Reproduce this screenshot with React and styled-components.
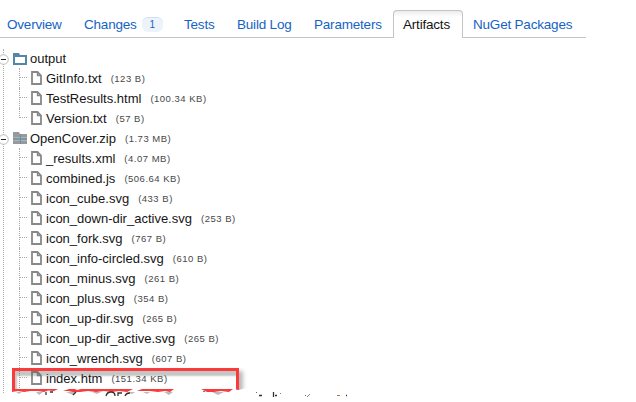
import React from "react";
import styled, { createGlobalStyle } from "styled-components";

const GlobalStyle = createGlobalStyle`
  * { box-sizing: border-box; }
  body { margin: 0; background: #fff; }
`;

const Page = styled.main`
  position: relative;
  width: 636px;
  height: 402px;
  overflow: hidden;
  background: #fff;
  font: 13px/20px "Liberation Sans", Arial, sans-serif;
  color: #151515;
`;

const TabBar = styled.nav`
  display: flex;
  align-items: flex-end;
  width: 586px;
  height: 38px;
  padding-left: 7px;
  border-bottom: 1px solid #c4c4c4;
  font-size: 13.5px;
`;

const Tab = styled.a`
  display: flex;
  flex: none;
  align-items: center;
  width: ${(p) => p.$width}px;
  height: 27px;
  padding-top: 2px;
  color: #1564c4;
  white-space: nowrap;
  letter-spacing: -0.2px;
`;

const ActiveTab = styled(Tab)`
  height: 28px;
  margin: 0 10px -1px -10px;
  padding: 0 0 0 9px;
  color: #151515;
  border: 1px solid #c4c4c4;
  border-bottom: 0;
  border-radius: 4px 4px 0 0;
  background: linear-gradient(#ececec, #fff 6px);
`;

const Badge = styled.span`
  width: 21px;
  height: 15px;
  margin-left: 5px;
  border-top: 1px solid #cfdfef;
  border-radius: 6px;
  background: #edf3fa;
  font-size: 10px;
  line-height: 14px;
  text-align: center;
`;

const Tree = styled.div`
  position: relative;
  padding-top: 10px;
  &::before {
    content: "";
    position: absolute;
    left: 3px;
    top: 11px;
    height: 344px;
    border-left: 1px dotted #aaa;
  }
`;

const Row = styled.div`
  display: flex;
  align-items: center;
  height: 20px;
  white-space: nowrap;
`;

const Toggle = styled.svg`
  position: relative;
  flex: none;
  width: 9px;
  height: 11px;
  margin: 3px 4px 0 0;
`;

const FolderIcon = styled.svg`
  flex: none;
  width: 14px;
  height: 12px;
  margin: ${(p) => (p.$archive ? 0 : 2)}px 3px 0 0;
`;

const Branch = styled.span`
  position: relative;
  flex: none;
  width: 12px;
  height: 20px;
  margin-left: 19px;
  &::before {
    content: "";
    position: absolute;
    left: 0;
    top: 0;
    height: ${(p) => (p.$last ? 10 : 20)}px;
    border-left: 1px dotted #aaa;
  }
  &::after {
    content: "";
    position: absolute;
    left: 1px;
    top: 9px;
    width: 7px;
    border-top: 1px dotted #aaa;
  }
`;

const FileIcon = styled.svg`
  flex: none;
  width: 11px;
  height: 14px;
  margin-right: 4px;
`;

const Name = styled.span`
  line-height: 18px;
  padding-top: 1px;
`;

const Size = styled.span`
  margin-left: 9px;
  padding-top: 2px;
  font-size: 9.5px;
  color: #484848;
  letter-spacing: 0.5px;
`;

const Highlight = styled.div`
  position: absolute;
  left: 12px;
  top: 368px;
  width: 227px;
  height: 24px;
  border: 3px solid #f93b3b;
  border-bottom: 0;
  box-shadow: 4px 3px 4px #bbb, inset 2px 5px 2px rgba(90, 90, 90, 0.35);
`;

const TornEdge = styled.svg`
  position: absolute;
  left: 0;
  top: 388px;
  width: 636px;
  height: 14px;
`;

const outputFiles = [
  ["GitInfo.txt", "123 B"],
  ["TestResults.html", "100.34 KB"],
  ["Version.txt", "57 B"],
];
const archiveFiles = [
  ["_results.xml", "4.07 MB"],
  ["combined.js", "506.64 KB"],
  ["icon_cube.svg", "433 B"],
  ["icon_down-dir_active.svg", "253 B"],
  ["icon_fork.svg", "767 B"],
  ["icon_info-circled.svg", "610 B"],
  ["icon_minus.svg", "261 B"],
  ["icon_plus.svg", "354 B"],
  ["icon_up-dir.svg", "265 B"],
  ["icon_up-dir_active.svg", "265 B"],
  ["icon_wrench.svg", "607 B"],
  ["index.htm", "151.34 KB"],
];

function Folder({ name, size, archive }) {
  return (
    <Row>
      <Toggle viewBox="0 0 9 11">
        <circle cx="3.5" cy="5.5" r="4.8" fill="#fff" stroke="#bbb" />
        <path d="M1 5.5h5" stroke="#222" />
      </Toggle>
      <FolderIcon viewBox="0 0 14 12" $archive={archive}>
        {archive ? (
          <>
            <path d="M0 0h6l1 2h7v10H0z" fill="#999" />
            <path d="M0 5.5h14M0 8.5h14" stroke="#bcc5ca" strokeWidth="0.6" />
            <path d="M0 7h14M7.5 2v10" stroke="#5f93b3" />
          </>
        ) : (
          <path d="M0 0h6l1 2h7v10H0zM2 4v6h10V4z" fill="#5487a5" fillRule="evenodd" />
        )}
      </FolderIcon>
      <Name>{name}</Name>
      {size && <Size>({size})</Size>}
    </Row>
  );
}

function File({ name, size, last }) {
  return (
    <Row>
      <Branch $last={last} />
      <FileIcon viewBox="0 0 11 14">
        <path d="M1 1h5.5L10 4.5V13H1z" fill="none" stroke="#888" strokeWidth="1.8" />
        <path d="M6.5 1v3.5h3.5" fill="none" stroke="#888" strokeWidth="1.4" />
      </FileIcon>
      <Name>{name}</Name>
      <Size>({size})</Size>
    </Row>
  );
}

export default function App() {
  return (
    <>
      <GlobalStyle />
      <Page>
        <TabBar>
          <Tab $width={77}>Overview</Tab>
          <Tab $width={100}>Changes<Badge>1</Badge></Tab>
          <Tab $width={53}>Tests</Tab>
          <Tab $width={77}>Build Log</Tab>
          <Tab $width={89}>Parameters</Tab>
          <ActiveTab $width={70}>Artifacts</ActiveTab>
          <Tab $width={100}>NuGet Packages</Tab>
        </TabBar>
        <Tree>
          <Folder name="output" />
          {outputFiles.map(([name, size], i) => (
            <File key={name} name={name} size={size} last={i === 2} />
          ))}
          <Folder name="OpenCover.zip" size="1.73 MB" archive />
          {archiveFiles.map(([name, size]) => (
            <File key={name} name={name} size={size} />
          ))}
        </Tree>
        <Highlight />
        <TornEdge viewBox="0 0 636 14">
          <path d="M9 1H232L239 2L246 0V14H9z" fill="#fff" />
          <path d="M12 1H58L54 3L48 2.5L44 4L38 3H30L24 4L18 3L12 4zM63 3L69 1H75L77 2L81 1H133L127 4L119 3L112 4L104 3L96 4L88 3L80 4L73 4L68 3zM137 3L142 1H174L170 4L165 3L158 4L150 3zM201 1H233L229 4L221 3L214 4L207 4z" fill="#f93b3b" />
          <path d="M16 4l3 2 3-2zM36 4l3 3 4-3zM66 4l7 3 3-3zM92 4l5 2 4-2zM126 4l6 2 3-2zM143 4l4 2 3-2zM164 4l5 3 4-3zM212 4l6 3 6-3z" fill="#bbb" />
          <g fill="none" stroke="#333" strokeWidth="1.3">
            <path d="M46 4v3M50 4h3M76 4l-3 3M106 8q1-4 5-4t4 4M118 8v-3h4M125 8q1-3 5-3M204 3v1" />
            <path d="M259 7.5h3M273.5 4v5M275 7.5h2M346 7.5h1" />
          </g>
          <path d="M256 4.5h1M305 7.5h1" stroke="#2678bc" />
          <path d="M280 5.5h1M307 9l3-3M337 7.5h3" stroke="#b87948" />
        </TornEdge>
      </Page>
    </>
  );
}
